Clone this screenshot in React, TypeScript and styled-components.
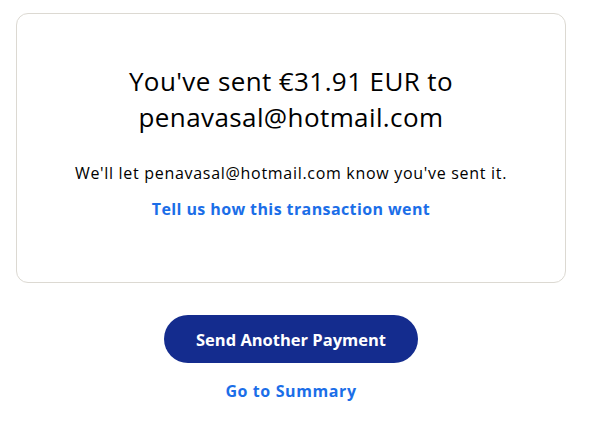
import React from "react";
import styled, { createGlobalStyle } from "styled-components";

const Global = createGlobalStyle`
  html, body { margin: 0; padding: 0; background: #ffffff; }
  body { font-family: "Open Sans", "Noto Sans", sans-serif; color: #001435; }
`;

const Page = styled.main`
  width: 550px;
  margin-left: 16px;
  padding-top: 13px;
  display: flex;
  flex-direction: column;
  align-items: center;
`;

const Card = styled.section`
  box-sizing: border-box;
  width: 550px;
  height: 270px;
  border: 1px solid #dcd9d2;
  border-radius: 12px;
  padding: 49px 40px 0;
  display: flex;
  flex-direction: column;
  align-items: center;
  text-align: center;
`;

const Heading = styled.h1`
  margin: 0;
  font-size: 26px;
  line-height: 36px;
  font-weight: 400;
  letter-spacing: 0.4px;
  color: #000000;
  max-width: 380px;
`;

const Message = styled.p`
  margin: 26px 0 0;
  font-size: 16px;
  line-height: 24px;
  letter-spacing: 0.7px;
  color: #000000;
`;

const Link = styled.a<{ $top: number; $spacing: number }>`
  display: block;
  margin-top: ${(p) => p.$top}px;
  font-size: 16px;
  line-height: 24px;
  font-weight: 700;
  letter-spacing: ${(p) => p.$spacing}px;
  color: #1b6ee8;
  text-decoration: none;
  cursor: pointer;
`;

const PrimaryButton = styled.button`
  margin-top: 32px;
  width: 254px;
  height: 48px;
  border: none;
  border-radius: 24px;
  background: #142c8e;
  color: #ffffff;
  font-family: inherit;
  font-size: 16.5px;
  font-weight: 700;
  cursor: pointer;
`;

export default function App() {
  return (
    <>
      <Global />
      <Page>
        <Card>
          <Heading>You've sent €31.91 EUR to penavasal@hotmail.com</Heading>
          <Message>We'll let penavasal@hotmail.com know you've sent it.</Message>
          <Link $top={12} $spacing={0.4}>Tell us how this transaction went</Link>
        </Card>
        <PrimaryButton>Send Another Payment</PrimaryButton>
        <Link $top={16} $spacing={0.6}>Go to Summary</Link>
      </Page>
    </>
  );
}
